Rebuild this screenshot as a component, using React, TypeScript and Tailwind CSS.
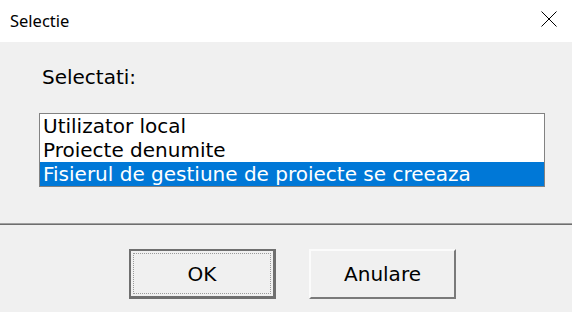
import React from "react";

const items = ["Utilizator local", "Proiecte denumite", "Fisierul de gestiune de proiecte se creeaza"];

export default function App() {
  const selected = 2;
  return (
    <div className="flex h-[312px] w-[572px] flex-col overflow-hidden bg-[#f0f0f0] text-black">
      <div className="flex h-[42px] shrink-0 items-center justify-between bg-white pl-[10px] pr-[15px]">
        <span className="text-[16.5px] font-['Noto_Sans',sans-serif] leading-none">Selectie</span>
        <svg width="16" height="16" viewBox="0 0 16 16" className="mt-[-5px]">
          <path d="M0.5 0.5 L15.5 15.5 M15.5 0.5 L0.5 15.5" stroke="#000" strokeWidth="1" fill="none" />
        </svg>
      </div>

      <div className="flex flex-col px-[39px] pt-[23px] font-['DejaVu_Sans',sans-serif] text-[20px] leading-[24px]">
        <p className="pl-[3px]">Selectati:</p>
        <ul className="mt-[24px] h-[74px] w-[506px] border border-[#828282] bg-white">
          {items.map((item, i) => (
            <li
              key={item}
              className={
                i === selected
                  ? "h-[24px] whitespace-nowrap bg-[#0078d7] pl-[3px] text-white"
                  : "h-[24px] whitespace-nowrap pl-[3px]"
              }
            >
              {item}
            </li>
          ))}
        </ul>
      </div>

      <div className="mt-[36px] flex flex-col">
        <div className="h-[1px] bg-[#a0a0a0]" />
        <div className="h-[1px] bg-[#6e6e6e]" />
      </div>

      <div className="mt-[24px] flex gap-[33px] pl-[129px] font-['DejaVu_Sans',sans-serif] text-[20px]">
        <button className="h-[50px] w-[147px] border-2 border-b-[3px] border-r-[3px] border-[#6f6f6f] bg-[#f0f0f0] p-[2px]">
          <div className="flex h-full items-center justify-center border border-dotted border-[#9a9a9a]">OK</div>
        </button>
        <button className="flex h-[50px] w-[147px] items-center justify-center border-2 border-b-[#7a7a7a] border-l-[#fbfbfb] border-r-[#7a7a7a] border-t-[#fbfbfb] bg-[#f0f0f0]">
          Anulare
        </button>
      </div>
    </div>
  );
}
